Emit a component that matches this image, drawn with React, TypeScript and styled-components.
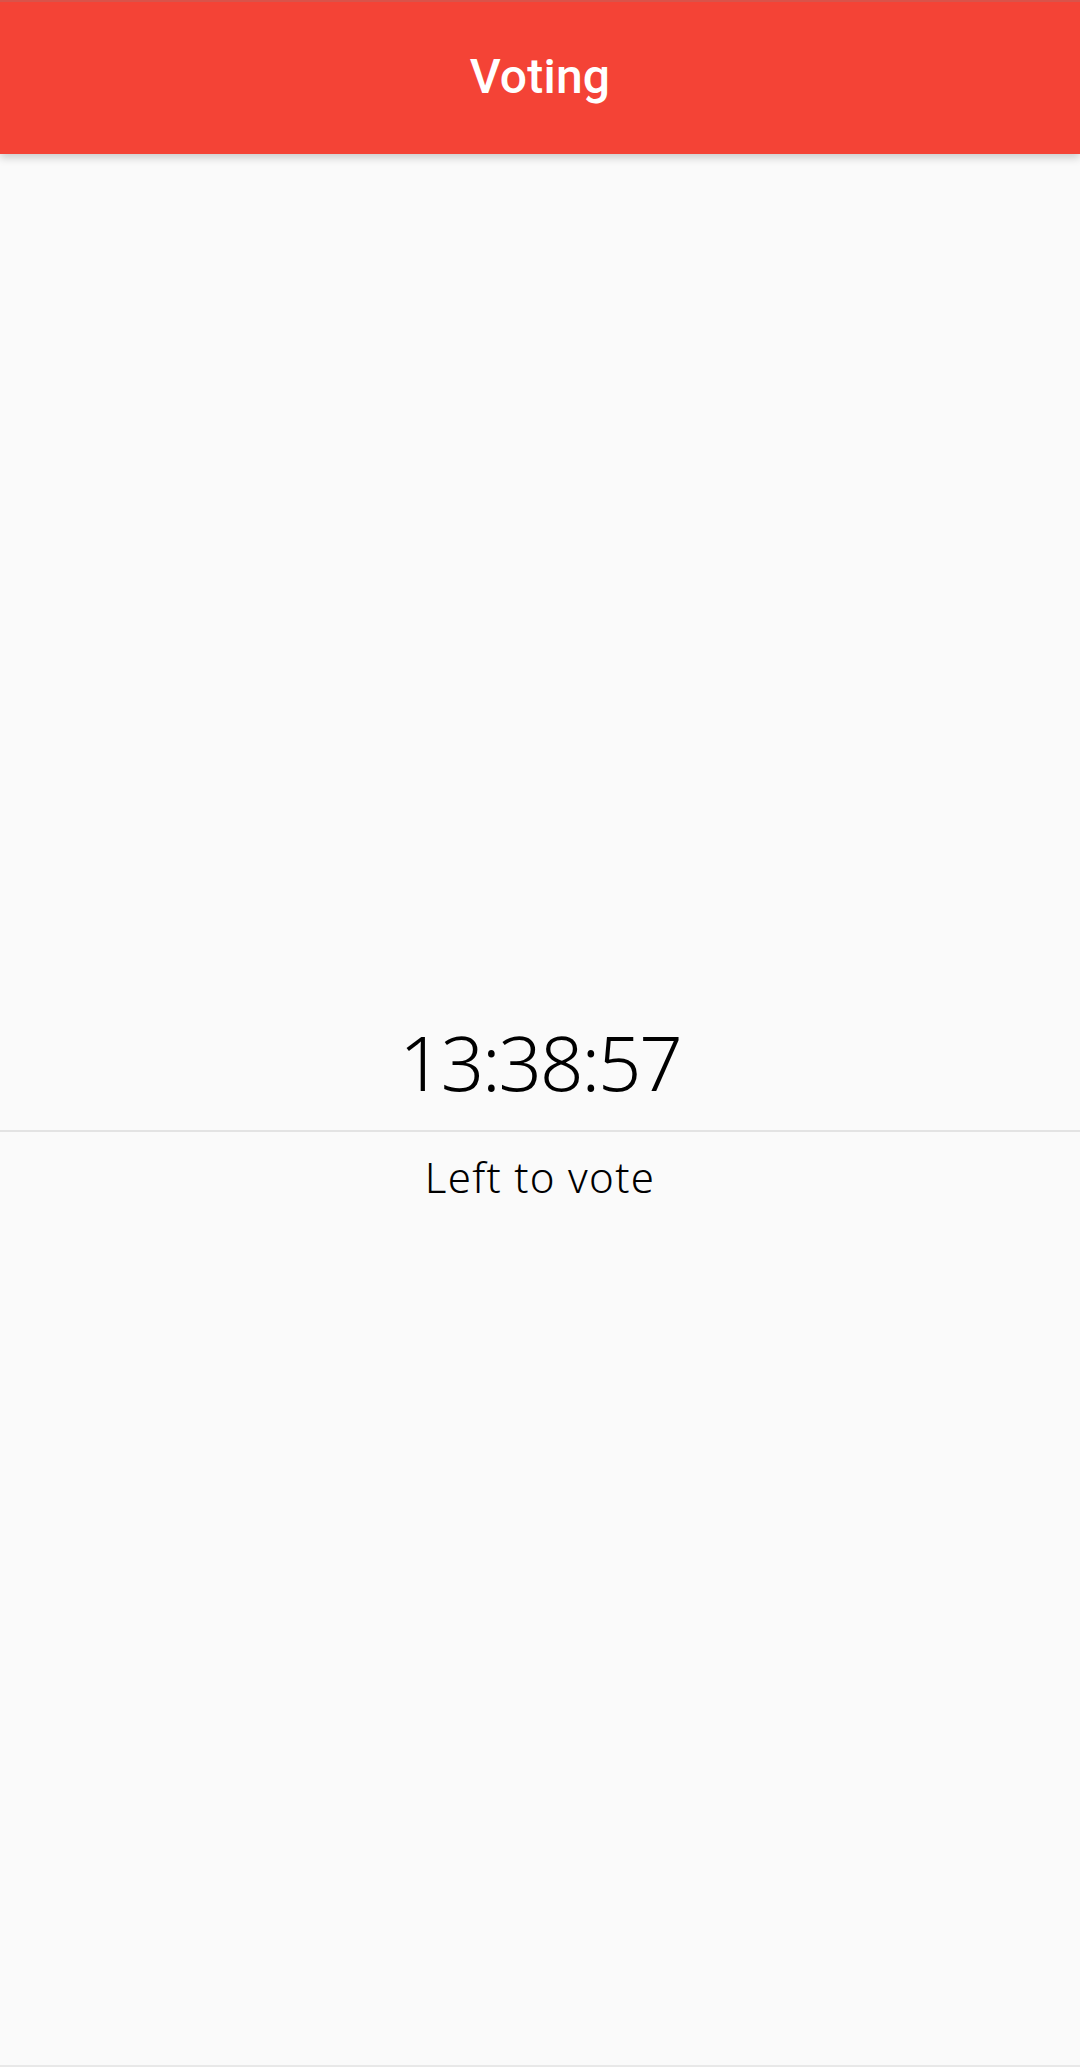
import React from "react";
import styled, { createGlobalStyle } from "styled-components";

const Global = createGlobalStyle`
  html, body {
    margin: 0;
    padding: 0;
    background: #fafafa;
  }
  * { box-sizing: border-box; }
`;

const Page = styled.div`
  display: flex;
  flex-direction: column;
  height: 2067px;
  background: #fafafa;
  border-bottom: 2px solid #e8e8e8;
`;

const AppBar = styled.header`
  height: 154px;
  flex-shrink: 0;
  background: #f44336;
  border-top: 2px solid #d9534a;
  padding-bottom: 4px;
  display: flex;
  align-items: center;
  justify-content: center;
  box-shadow: 0 4px 8px rgba(0, 0, 0, 0.18);
  position: relative;
  z-index: 1;
`;

const Title = styled.h1`
  margin: 0;
  color: #ffffff;
  font-family: Roboto, "Liberation Sans", sans-serif;
  font-weight: 500;
  font-size: 48px;
  letter-spacing: 0.2px;
`;

const Main = styled.main`
  flex: 1;
  display: flex;
  flex-direction: column;
  align-items: stretch;
  padding-top: 858px;
`;

const Timer = styled.div`
  text-align: center;
  font-family: "Noto Sans", "Open Sans", sans-serif;
  font-weight: 300;
  font-size: 76px;
  line-height: 100px;
  color: #000;
  letter-spacing: -2px;
  margin-bottom: 18px;
`;

const Divider = styled.hr`
  margin: 0;
  border: none;
  height: 2px;
  background: #e3e3e3;
`;

const Label = styled.div`
  text-align: center;
  font-family: "Noto Sans", "Open Sans", sans-serif;
  font-weight: 300;
  font-size: 42px;
  line-height: 60px;
  color: #000;
  letter-spacing: 1.3px;
  margin-top: 15px;
`;

export default function App() {
  return (
    <>
      <Global />
      <Page>
        <AppBar>
          <Title>Voting</Title>
        </AppBar>
        <Main>
          <Timer>13:38:57</Timer>
          <Divider />
          <Label>Left to vote</Label>
        </Main>
      </Page>
    </>
  );
}
